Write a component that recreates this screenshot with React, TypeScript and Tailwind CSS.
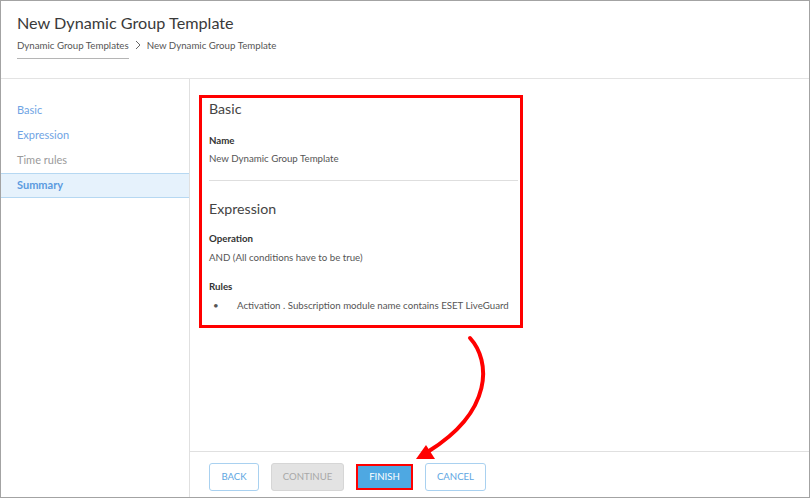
import React from "react";

// Wizard summary step: header + breadcrumb, left step list, summary panel, footer buttons.
// Red box and curved arrow are annotations drawn over the page.
const STEPS = [
  { label: "Basic", state: "done" },
  { label: "Expression", state: "done" },
  { label: "Time rules", state: "idle" },
  { label: "Summary", state: "active" },
];

const FONT = { fontFamily: 'Lato, "Open Sans", sans-serif' };

export default function App() {
  return (
    <div
      className="relative w-[810px] h-[498px] bg-white border border-[#a3a3a3] flex flex-col overflow-hidden"
      style={FONT}
    >
      {/* Header */}
      <div className="h-[78px] shrink-0 border-b border-[#e3e3e3] pl-4 pt-[10px]">
        <div className="text-[16.2px] leading-6 text-[#3a3a3a]">New Dynamic Group Template</div>
        <div className="mt-[2px] flex items-center text-[9.7px] text-[#555]">
          <span className="border-b border-[#b5b5b5] pb-[5px] pt-[1px]">Dynamic Group Templates</span>
          <svg width="14" height="14" viewBox="0 0 14 14" className="mx-[2px] -mt-[5px]">
            <path d="M5 3l4 4-4 4" fill="none" stroke="#666" strokeWidth="1" />
          </svg>
          <span className="-mt-[5px]">New Dynamic Group Template</span>
        </div>
      </div>

      {/* Body */}
      <div className="flex flex-1 min-h-0">
        <div className="w-[189px] shrink-0 border-r border-[#e0e0e0] pt-[19px]">
          {STEPS.map((s) => (
            <div
              key={s.label}
              className={
                s.state === "active"
                  ? "h-[25px] flex items-center pl-4 text-[11px] font-bold text-[#5b9be0] bg-[#e6f2fc] border-y border-[#b6d8f2]"
                  : s.state === "done"
                  ? "h-[25px] flex items-center pl-4 text-[11px] text-[#6fa4e4]"
                  : "h-[25px] flex items-center pl-4 text-[11px] text-[#9a9a9a]"
              }
            >
              {s.label}
            </div>
          ))}
        </div>

        <div className="flex-1 flex flex-col min-w-0">
          <div className="flex-1 pt-[16px] pl-[9px]">
            <div className="w-[324px] h-[233px] border-[3px] border-[#ff0000] pl-[7px] text-[#444]">
              <div className="h-[21px] text-[14.2px] leading-[21px] text-[#444]">Basic</div>
              <div className="mt-[12px] h-[18px] text-[9.7px] leading-[18px] font-bold text-[#333]">Name</div>
              <div className="h-[19px] text-[9.7px] leading-[19px] text-[#555]">New Dynamic Group Template</div>
              <div className="mt-[12px] border-t border-[#dedede] mr-[2px]" />
              <div className="mt-[17px] h-[21px] text-[14.2px] leading-[21px] text-[#444]">Expression</div>
              <div className="mt-[10px] h-[18px] text-[9.7px] leading-[18px] font-bold text-[#333]">Operation</div>
              <div className="h-[20px] text-[9.7px] leading-[20px] text-[#555]">AND (All conditions have to be true)</div>
              <div className="mt-[10px] h-[18px] text-[9.7px] leading-[18px] font-bold text-[#333]">Rules</div>
              <div className="h-[20px] flex items-center text-[9.7px] text-[#555] whitespace-nowrap">
                <span className="w-[28px] shrink-0 pl-[4px]">•</span>
                <span>Activation . Subscription module name contains ESET LiveGuard</span>
              </div>
            </div>
          </div>

          <div className="h-[46px] shrink-0 border-t border-[#e0e0e0] pl-[19px] pt-[11px] flex items-start gap-[12px] text-[9.6px]">
            <button className="h-[28px] w-[50px] rounded-[3px] border border-[#a9d1f0] bg-white text-[#5ea6e2]">
              BACK
            </button>
            <button className="h-[28px] w-[73px] rounded-[3px] border border-[#d6d6d6] bg-[#e3e3e3] text-[#a8a8a8]">
              CONTINUE
            </button>
            <div className="mt-[1px] border-2 border-[#ff0000] p-0">
              <button className="h-[22px] w-[53px] bg-[#4ea8e2] text-white block">FINISH</button>
            </div>
            <button className="h-[28px] w-[61px] rounded-[3px] border border-[#a9d1f0] bg-white text-[#5ea6e2]">
              CANCEL
            </button>
          </div>
        </div>
      </div>

      {/* Annotation arrow */}
      <svg className="absolute left-0 top-0 pointer-events-none" width="810" height="498">
        <path
          d="M469 337 C 490 360 492 410 428 450"
          fill="none"
          stroke="#ff0000"
          strokeWidth="4"
          strokeLinecap="round"
        />
        <polygon points="415,458 425,444 434,458" fill="#ff0000" />
      </svg>
    </div>
  );
}
